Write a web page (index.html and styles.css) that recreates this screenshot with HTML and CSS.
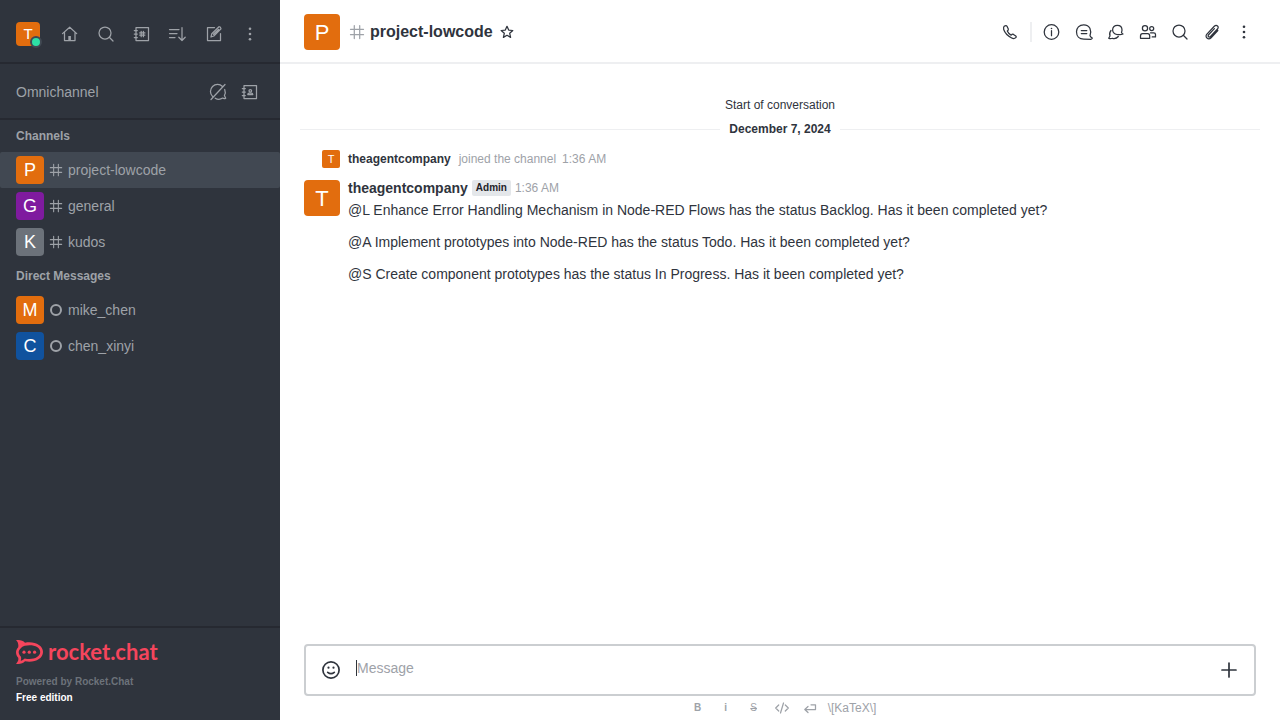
FILE: index.html
```html
<!DOCTYPE html>
<html lang="en">
<head>
<meta charset="utf-8">
<title>project-lowcode</title>
<meta name="viewport" content="width=device-width, initial-scale=1">
<link rel="stylesheet" href="styles.css">
</head>
<body>
<svg class="sprite" aria-hidden="true">
  <symbol id="hash" viewBox="0 0 16 16"><path d="M5.300 1.500v13M10.700 1.500v13M1.500 5.300h13M1.500 10.700h13"/></symbol>
  <symbol id="search" viewBox="0 0 20 20"><circle cx="9" cy="9" r="6"/><path d="M13.300 13.300l3.700 3.700"/></symbol>
  <symbol id="kebab" viewBox="0 0 20 20"><g class="solid"><circle cx="10" cy="4.800" r="1.300"/><circle cx="10" cy="10" r="1.300"/><circle cx="10" cy="15.200" r="1.300"/></g></symbol>
</svg>
<div class="app">
  <aside class="sidebar">
    <header class="sidebar-top">
      <button class="user" aria-label="User menu"><span class="avatar small orange">T</span><span class="online"></span></button>
      <div class="toolbar spread">
        <button class="tool" aria-label="Home"><svg class="icon" viewBox="0 0 20 20"><path d="M2.500 9.600L9.700 3.200l7 6.400M4.500 8.300V16.500h10.500V8.300"/><path class="solid" d="M8.300 16.500v-4.500h2.600v4.500z"/></svg></button>
        <button class="tool" aria-label="Search"><svg class="icon"><use href="#search"/></svg></button>
        <button class="tool" aria-label="Directory"><svg class="icon" viewBox="0 0 20 20"><path d="M4 3.500h12.500v13H4zM2.300 6.500h3M2.300 10h3M2.300 13.500h3M9.200 7.300v5.400M11.400 7.300v5.400M7.700 8.900h5.200M7.700 11.100h5.200"/></svg></button>
        <button class="tool" aria-label="Sort"><svg class="icon" viewBox="0 0 20 20"><path d="M1.500 5.500h9.500M1.500 9.500h7.500M1.500 13.500h5.500M14 3.500v13M10.800 13.200l3.200 3.300 3.200-3.300"/></svg></button>
        <button class="tool" aria-label="Create new"><svg class="icon" viewBox="0 0 20 20"><path d="M10.500 3.500H3.500v13h13V9.500M7 13l.8-3.300 7.200-7q1.800 0 2 2L9.800 12zM9.500 10.300l5-4.800"/></svg></button>
        <button class="tool" aria-label="More"><svg class="icon"><use href="#kebab"/></svg></button>
      </div>
    </header>
    <section class="omni">
      <span>Omnichannel</span>
      <div class="toolbar">
        <button class="tool" aria-label="Turn on answer chats"><svg class="icon" viewBox="0 0 20 20"><path d="M4.500 14.400A7 7 0 0 1 14.500 4.500M16.700 7.500a7 7 0 0 1-.3 6l1.300 2.800q-2 .6-3-.2a7 7 0 0 1-7.500.1M17 2.500L3 17.500"/></svg></button>
        <button class="tool" aria-label="Contact center"><svg class="icon" viewBox="0 0 20 20"><path d="M4 3.500h12.500v13H4zM2.300 6.500h3M2.300 10h3M2.300 13.500h3M7.800 12.600q0-1.600 1.500-1.600h2q1.500 0 1.500 1.600z"/><circle cx="10.300" cy="8.800" r="1.300"/></svg></button>
      </div>
    </section>
    <nav class="rooms">
      <h2 class="group">Channels</h2>
      <a class="room selected" href="#"><span class="avatar medium orange">P</span><svg class="room-icon"><use href="#hash"/></svg><span>project-lowcode</span></a>
      <a class="room" href="#"><span class="avatar medium purple">G</span><svg class="room-icon"><use href="#hash"/></svg><span>general</span></a>
      <a class="room" href="#"><span class="avatar medium gray">K</span><svg class="room-icon"><use href="#hash"/></svg><span>kudos</span></a>
      <h2 class="group">Direct Messages</h2>
      <a class="room" href="#"><span class="avatar medium orange">M</span><svg class="room-icon offline" viewBox="0 0 14 14"><circle cx="7" cy="7" r="5"/></svg><span>mike_chen</span></a>
      <a class="room" href="#"><span class="avatar medium blue">C</span><svg class="room-icon offline" viewBox="0 0 14 14"><circle cx="7" cy="7" r="5"/></svg><span>chen_xinyi</span></a>
    </nav>
    <footer class="brand">
      <a class="logo" href="#">
        <svg class="logo-mark" viewBox="0 0 27 24" aria-hidden="true"><path class="logo-fill" fill-rule="evenodd" d="M0 .3C3.500-.3 7 .5 9 2.700C18 .8 27 5 27 12S18 23 9 21.200C7 23.500 3.500 24.300 0 23.700C2.200 21.600 2.700 19.500 2.200 17.700C-.7 14.500-.7 10.500 2.200 7.300C2.700 4.200 2 2 0 .3zM4.800 8.200C2 10.800 2 13.500 4.800 16.500C5.400 18 5.200 19.300 4.700 20.700C6.500 20.300 7.600 19.400 8.700 18.400C16.500 20.300 24.200 17.300 24.200 12S16.500 3.800 8.700 5.800C7 6.300 5.700 7.200 4.800 8.200z"/><g class="logo-fill"><circle cx="8" cy="12.200" r="1.600"/><circle cx="13.300" cy="12.200" r="1.600"/><circle cx="18.600" cy="12.200" r="1.600"/></g></svg>
        <span>rocket.chat</span>
      </a>
      <p class="powered">Powered by Rocket.Chat</p>
      <p class="edition">Free edition</p>
    </footer>
  </aside>
  <main class="main">
    <header class="room-header">
      <span class="avatar large orange">P</span>
      <svg class="title-hash"><use href="#hash"/></svg>
      <h1 class="title">project-lowcode</h1>
      <button class="star" aria-label="Favorite"><svg viewBox="0 0 16 16"><path d="M8 2.300l1.700 3.800 4.100.4-3.100 2.800.9 4.100L8 11.300l-3.600 2.100.9-4.100-3.100-2.800 4.100-.4z"/></svg></button>
      <div class="toolbar dark">
        <button class="tool" aria-label="Call"><svg class="icon" viewBox="0 0 20 20"><path d="M4.200 4.200Q6.200 2.800 7 4.300L8.300 7q.4 1-1 2 .8 2.200 3.900 4.200 1.200-1.400 2.300-.8l2.300 1.500q1 .8-.3 2Q14 17.300 11.300 15.700 5.500 12.600 3.700 7.500 3.300 5.200 4.200 4.200z"/></svg></button>
        <span class="separator"></span>
        <button class="tool" aria-label="Room information"><svg class="icon" viewBox="0 0 20 20"><circle cx="9.500" cy="10" r="7.300"/><path d="M9.500 8.700v5"/><circle class="solid" cx="9.500" cy="6.500" r=".8"/></svg></button>
        <button class="tool" aria-label="Threads"><svg class="icon" viewBox="0 0 20 20"><path d="M16 13.800C17.800 8.500 16 2.800 9.700 2.800C5.200 2.800 2.500 6 2.500 9.800C2.500 14 5.200 17.200 9.700 17.200L17 17.300Q18.800 16.500 18 15.800Q16.700 15.500 16 13.800zM7.300 8.500h5.500M7.300 11.500h5.500"/></svg></button>
        <button class="tool" aria-label="Discussion"><svg class="icon" viewBox="0 0 20 20"><path d="M15.500 10.300q.3 1.200 1.500 1.700-2.500 1-4.200.5C9.200 13 6.700 11 6.600 8C6.600 5 8.700 3.300 11.300 3.300S16 5 16 8Q16 9.300 15.500 10.300zM5 8.500Q2.900 11 4 14L2.700 16.200Q4.500 17.200 6.500 16.300Q10 17.200 12.300 14.500"/></svg></button>
        <button class="tool" aria-label="Members"><svg class="icon" viewBox="0 0 20 20"><circle cx="7" cy="6.300" r="2.600"/><circle cx="13.700" cy="6.500" r="2"/><path d="M2.500 16.300V14q0-2.300 2-2.300h5.200q2 0 2 2.300v2.300zM12.500 10.800h3.200q1.800 0 1.800 1.800v2.300h-3.300"/></svg></button>
        <button class="tool" aria-label="Search messages"><svg class="icon"><use href="#search"/></svg></button>
        <button class="tool" aria-label="Files"><svg class="icon" viewBox="0 0 20 20"><path d="M15.800 8.500l-6.700 7.200c-2.800 3-6.800-.8-4.200-3.600l7.400-7.800c2.200-2.300 5.300.4 3.200 2.700l-7 7.500c-1.300 1.500-3.200-.3-1.900-1.700l5.800-6.200"/></svg></button>
        <button class="tool" aria-label="More options"><svg class="icon"><use href="#kebab"/></svg></button>
      </div>
    </header>
    <section class="messages">
      <p class="start">Start of conversation</p>
      <div class="divider"><time>December 7, 2024</time></div>
      <div class="system"><span class="avatar tiny orange">T</span><b>theagentcompany</b><span class="muted">joined the channel</span><time class="muted">1:36 AM</time></div>
      <article class="message">
        <span class="avatar large orange">T</span>
        <div class="content">
          <div class="byline"><b class="name">theagentcompany</b><span class="badge">Admin</span><time class="muted">1:36 AM</time></div>
          <p>@L Enhance Error Handling Mechanism in Node-RED Flows has the status Backlog. Has it been completed yet?</p>
          <p>@A Implement prototypes into Node-RED has the status Todo. Has it been completed yet?</p>
          <p>@S Create component prototypes has the status In Progress. Has it been completed yet?</p>
        </div>
      </article>
    </section>
    <form class="composer">
      <div class="box">
        <button type="button" class="box-button" aria-label="Emoji"><svg viewBox="0 0 20 20"><circle cx="10" cy="10" r="8.100"/><path d="M6.700 12.300q3.300 2.700 6.600 0"/><circle class="solid" cx="7.500" cy="7.700" r="1.100"/><circle class="solid" cx="12.500" cy="7.700" r="1.100"/></svg></button>
        <input class="text" type="text" placeholder="Message" aria-label="Message">
        <button type="button" class="box-button" aria-label="Add"><svg viewBox="0 0 20 20"><path d="M10 3v14M3 10h14"/></svg></button>
      </div>
      <div class="formatting">
        <button type="button" class="format" aria-label="Bold"><b>B</b></button>
        <button type="button" class="format" aria-label="Italic"><b>i</b></button>
        <button type="button" class="format" aria-label="Strike"><s>S</s></button>
        <button type="button" class="format" aria-label="Code"><svg viewBox="0 0 16 16"><path d="M4.700 5L1.700 8l3 3M11.300 5l3 3-3 3M9.500 3L6.500 13"/></svg></button>
        <button type="button" class="format" aria-label="Multiline"><svg viewBox="0 0 16 16"><path d="M9 4.800h4.500v4.700H3M6 6.500l-3.200 3L6 12.500"/></svg></button>
        <a class="katex" href="#">\[KaTeX\]</a>
      </div>
    </form>
  </main>
</div>
</body>
</html>
```
FILE: styles.css
```css
* { box-sizing: border-box; }
body { margin: 0; font-family: "Liberation Sans", Arial, sans-serif; font-size: 14px; line-height: 20px; color: #2f343d; background: #fff; }
h1, h2, p { margin: 0; }
a { color: inherit; text-decoration: none; }
button { padding: 0; border: 0; background: none; color: inherit; font: inherit; cursor: pointer; }
svg { fill: none; stroke: currentColor; stroke-width: 1.25; stroke-linecap: round; stroke-linejoin: round; }
.sprite { position: absolute; width: 0; height: 0; }
.solid { fill: currentColor; stroke: none; }
.app { display: flex; min-height: 100vh; }

.sidebar { display: flex; flex-direction: column; flex: 0 0 280px; background: #2f343d; color: #9ea2a8; }
.sidebar-top { display: flex; align-items: center; justify-content: space-between; height: 64px; padding: 6px 16px 0; border-bottom: 2px solid #262931; }
.user { position: relative; display: flex; }
.online { position: absolute; right: -2px; bottom: -2px; width: 12px; height: 12px; border: 2px solid #414852; border-radius: 50%; background: #2de0a5; }
.toolbar { display: flex; align-items: center; gap: 4px; }
.spread { gap: 8px; }
.tool { display: flex; align-items: center; justify-content: center; width: 28px; height: 28px; }
.icon { width: 20px; height: 20px; }
.omni { display: flex; align-items: center; justify-content: space-between; height: 56px; padding: 2px 16px 0; border-bottom: 2px solid #262931; }
.rooms { flex: 1; }
.group { padding: 6px 16px; font-size: 12px; line-height: 20px; font-weight: 700; }
.room { display: flex; align-items: center; height: 36px; padding: 0 16px; border-radius: 2px; }
.selected { background: #414852; }
.room-icon { width: 14px; height: 14px; margin: 0 5px; }
.offline { stroke-width: 2; }

.avatar { display: flex; flex: none; align-items: center; justify-content: center; border-radius: 4px; color: #fff; }
.tiny { width: 18px; height: 18px; border-radius: 2px; font-size: 11px; line-height: 18px; }
.small { width: 24px; height: 24px; font-size: 15px; line-height: 24px; }
.medium { width: 28px; height: 28px; font-size: 18px; line-height: 28px; }
.large { width: 36px; height: 36px; padding-top: 2px; font-size: 22px; line-height: 34px; }
.orange { background: #e26d0e; }
.purple { background: #7f1b9f; }
.gray { background: #6c727a; }
.blue { background: #10529e; }

.brand { padding: 12px 16px 14px; border-top: 2px solid #262931; font-size: 10px; line-height: 16px; font-weight: 700; }
.logo { display: flex; align-items: center; gap: 5px; height: 24px; margin-bottom: 10px; color: #f5455c; font-family: Lato, sans-serif; font-size: 22px; }
.logo-mark { width: 27px; height: 24px; }
.logo-fill { fill: currentColor; stroke: none; }
.powered { color: #6c727a; }
.edition { color: #fff; }

.main { display: flex; flex: 1; flex-direction: column; min-width: 0; }
.room-header { display: flex; align-items: center; height: 64px; padding: 2px 22px 0 24px; border-bottom: 2px solid #eeeff1; }
.title-hash { width: 16px; height: 16px; margin: 0 5px 0 9px; color: #9ea2a8; }
.title { font-size: 16px; line-height: 24px; }
.star { display: flex; margin-left: 6px; }
.star svg { width: 16px; height: 16px; }
.dark { margin-left: auto; }
.separator { width: 2px; height: 20px; margin: 0 2px; background: #eeeff1; }

.messages { flex: 1; padding: 31px 20px 0; font-size: 12px; }
.start { text-align: center; }
.divider { display: flex; align-items: center; gap: 9px; margin-top: 4px; font-weight: 700; }
.divider::before, .divider::after { flex: 1; height: 1px; background: #eeeff1; content: ""; }
.system { display: flex; align-items: center; margin-top: 10px; padding-left: 22px; }
.system b { margin: 0 8px; }
.system time { margin-left: 6px; }
.muted { color: #9ea2a8; }
.message { display: flex; gap: 8px; margin-top: 11px; padding: 0 4px; font-size: 14px; }
.content { display: flex; flex-direction: column; gap: 12px; min-width: 0; }
.byline { display: flex; align-items: center; gap: 4px; height: 16px; margin-bottom: -8px; }
.byline time { font-size: 12px; }
.badge { padding: 0 4px; border-radius: 2px; background: #e4e7ea; color: #1f2329; font-size: 10px; line-height: 16px; font-weight: 700; }

.composer { padding: 0 24px; }
.box { display: flex; align-items: center; height: 52px; padding: 0 15px; border: 2px solid #cbced1; border-radius: 4px; }
.box-button { display: flex; }
.box-button svg { width: 20px; height: 20px; stroke-width: 1.7; }
.text { flex: 1; min-width: 0; height: 16px; margin: 0 15px 4px; padding: 0; border: 0; border-left: 1px solid #2f343d; outline: 0; background: none; color: inherit; font: inherit; line-height: 16px; }
.text::placeholder { color: #9ea2a8; opacity: 1; }
.formatting { display: flex; align-items: center; justify-content: center; height: 24px; color: #9ea2a8; font-size: 12px; line-height: 16px; }
.format { display: flex; align-items: center; justify-content: center; width: 28px; height: 24px; font-size: 10px; }
.format svg { width: 16px; height: 16px; }
.katex { margin-left: 4px; }
```
